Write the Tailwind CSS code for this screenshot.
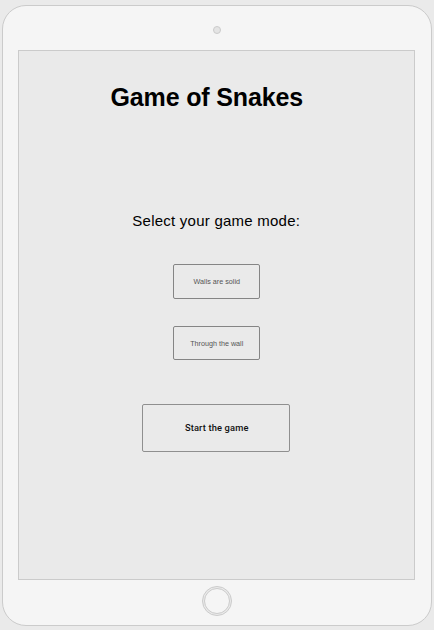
<!DOCTYPE html>
<html lang="en">
<head>
<meta charset="utf-8">
<title>Game of Snakes</title>
<script src="https://cdn.jsdelivr.net/npm/@tailwindcss/browser@4"></script>
</head>
<body class="h-[630px] w-[434px] overflow-hidden bg-[#eaeaea] pt-[5px] pl-[1.5px] font-['Liberation_Sans',sans-serif] text-black">
  <div class="flex h-[621px] w-[430.5px] flex-col items-center rounded-[24px] border border-[#cbcbcb] bg-[#f5f5f5]">
    <div class="flex h-[44px] shrink-0 items-center justify-center pt-[3px]">
      <div class="size-[8px] rounded-full border border-[#cbcbcb] bg-[#e4e4e4]"></div>
    </div>
    <main class="flex h-[530px] w-[397px] shrink-0 flex-col items-center border border-[#cbcbcb] bg-[#eaeaea]">
      <h1 class="mt-[31px] mr-[20px] h-[30px] text-[25px] leading-[30px] font-bold tracking-[-0.15px] whitespace-nowrap">Game of Snakes</h1>
      <p class="mt-[48px] mr-px pt-[51px] text-[15px] leading-[20px] tracking-[0.24px] whitespace-nowrap">Select your game mode:</p>
      <button class="mt-[33px] h-[35px] w-[87px] shrink-0 rounded-[2px] border border-[#858585] pt-[2px] text-[7.2px] whitespace-nowrap text-[#555]">Walls are solid</button>
      <button class="mt-[27px] h-[34px] w-[87px] shrink-0 rounded-[2px] border border-[#858585] pt-[2px] text-[7.2px] whitespace-nowrap text-[#555]">Through the wall</button>
      <button class="mt-[44px] mr-px h-[48px] w-[148px] shrink-0 rounded-[2px] border border-[#8f8f8f] pl-px font-[Roboto,sans-serif] text-[9.3px] font-medium tracking-[0.15px] whitespace-nowrap text-[#111]">Start the game</button>
    </main>
    <div class="mt-[6px] ml-px flex size-[30px] items-center justify-center rounded-full border border-[#cbcbcb] bg-[#eaeaea]">
      <div class="size-[26px] rounded-full border border-[#cbcbcb] bg-[#f5f5f5]"></div>
    </div>
  </div>
</body>
</html>
